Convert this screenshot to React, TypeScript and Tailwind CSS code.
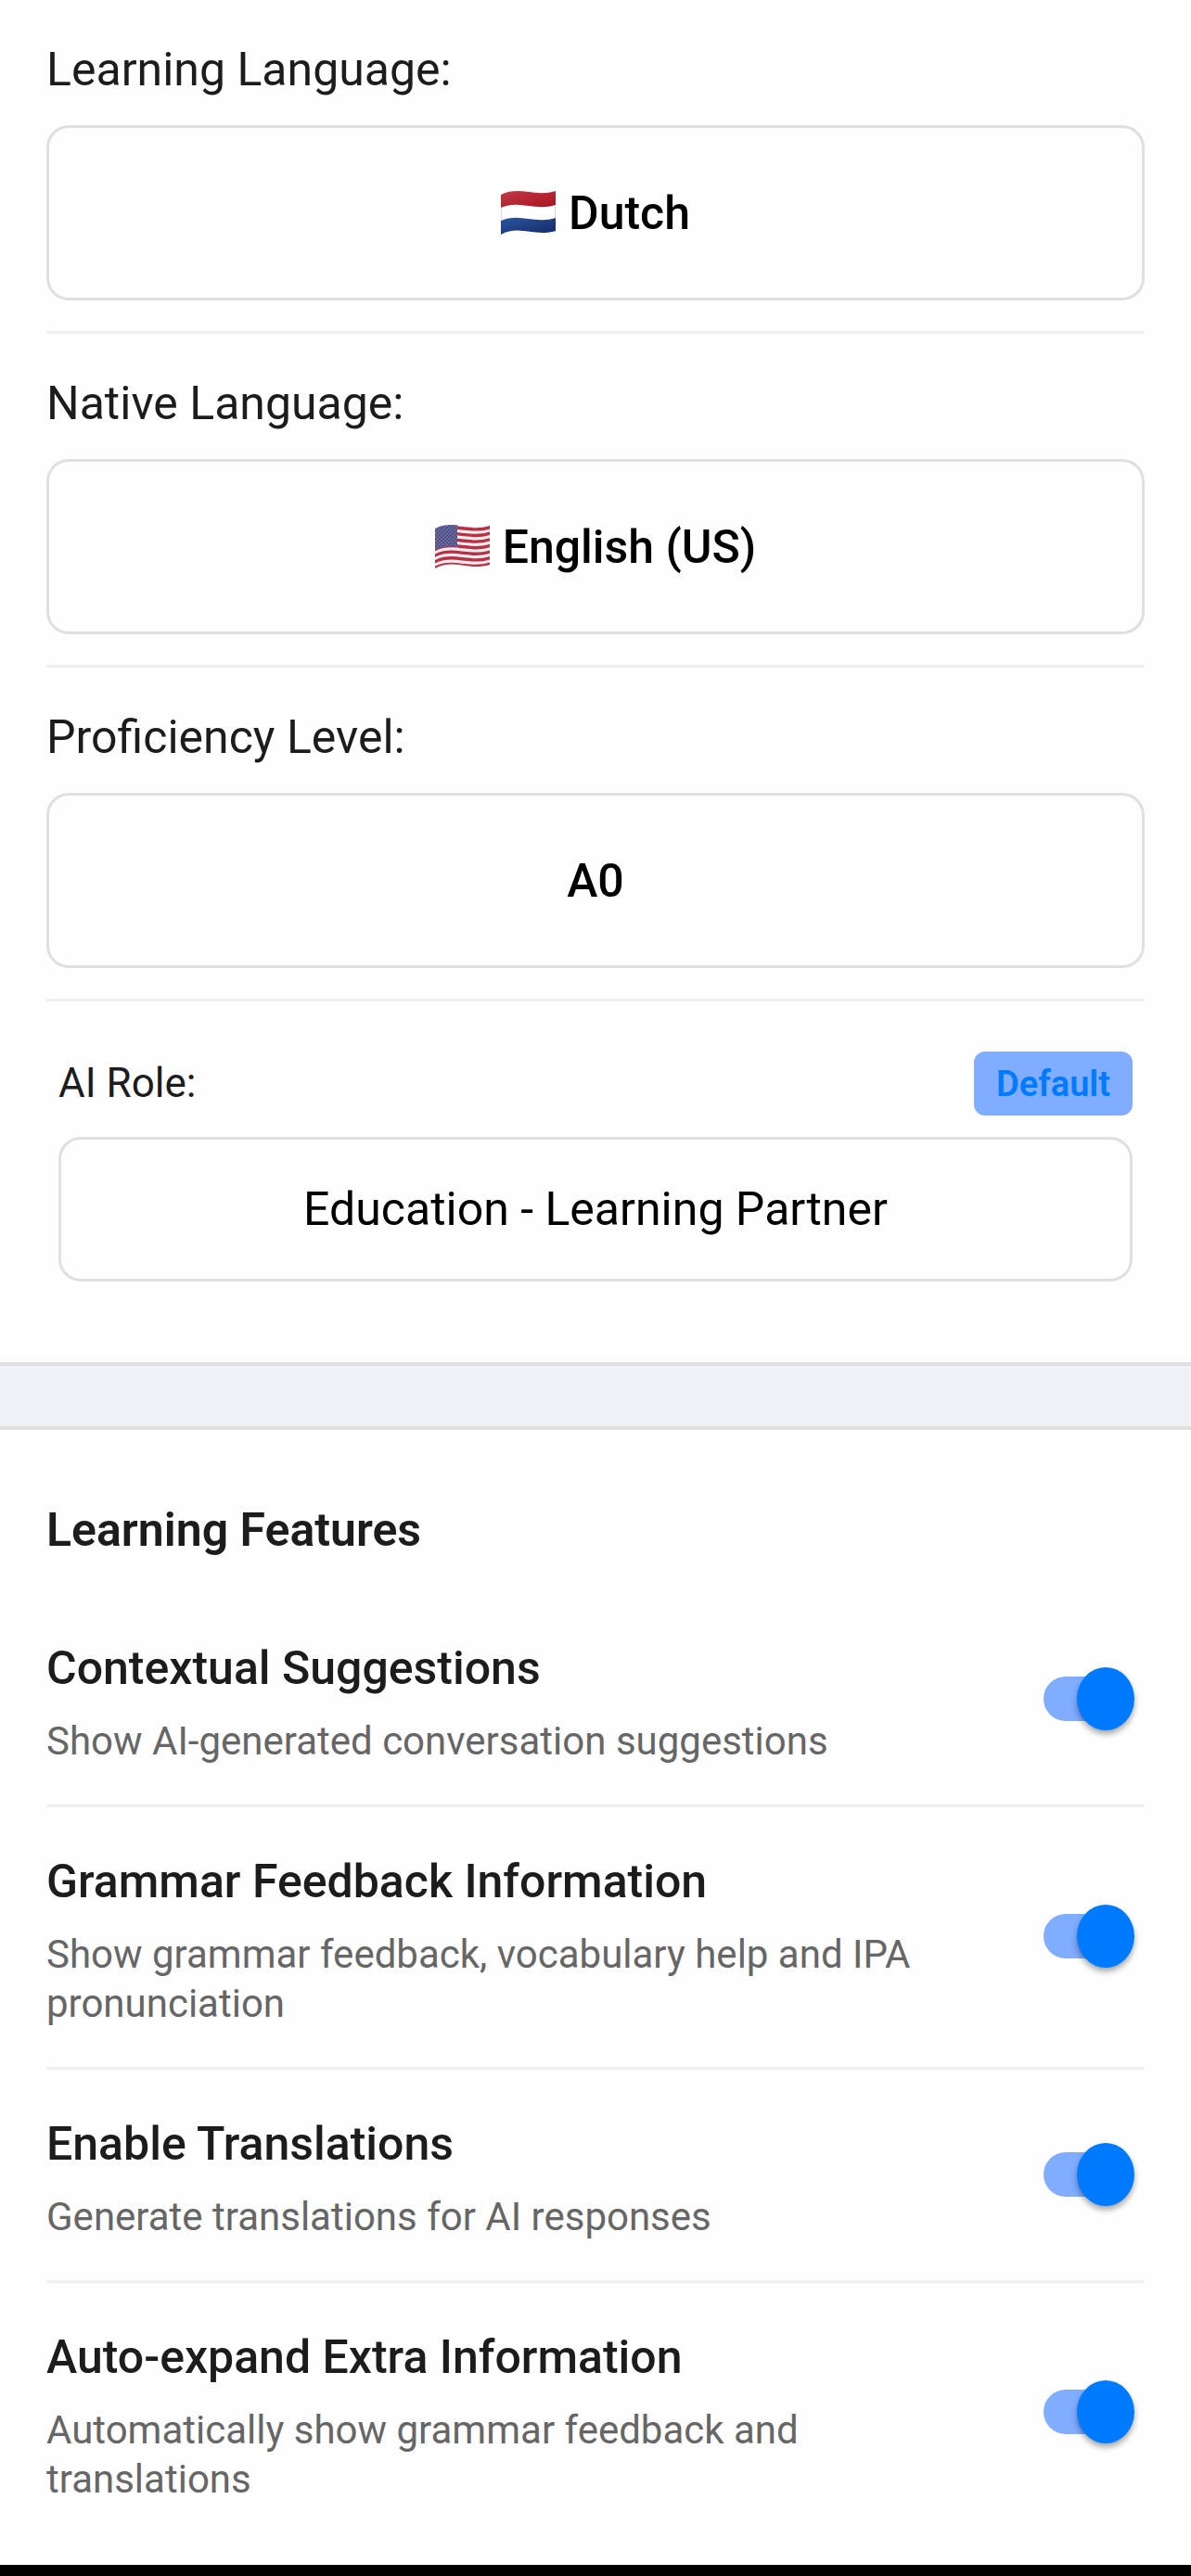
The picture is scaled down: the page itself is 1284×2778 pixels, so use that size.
import React, { useState } from "react";

const DutchFlag = () => (
  <svg viewBox="0 0 59 47" className="w-[59px] h-[47px]" aria-hidden="true">
    <defs>
      <linearGradient id="nl-red" x1="0" y1="0" x2="1" y2="1">
        <stop offset="0" stopColor="#c03a48" />
        <stop offset="1" stopColor="#aa1220" />
      </linearGradient>
      <linearGradient id="nl-blue" x1="0" y1="0" x2="1" y2="1">
        <stop offset="0" stopColor="#2a55a0" />
        <stop offset="1" stopColor="#142a66" />
      </linearGradient>
    </defs>
    <path d="M0 4C20 -6 36 7 59 0V43C36 50 20 36 0 46Z" fill="#fff" />
    <path d="M0 4C20 -6 36 7 59 0V15C36 22 20 9 0 18Z" fill="url(#nl-red)" />
    <path d="M0 32C20 23 36 36 59 29V43C36 50 20 36 0 47Z" fill="url(#nl-blue)" />
    <path d="M0.5 18V32M58.5 15V29" stroke="#dcdcdc" strokeWidth="1" />
  </svg>
);

const UsFlag = () => (
  <svg viewBox="0 0 59 47" className="w-[59px] h-[47px]" aria-hidden="true">
    <defs>
      <clipPath id="us-shape">
        <path d="M0 4C20 -6 36 7 59 0V43C36 50 20 36 0 47Z" />
      </clipPath>
      <pattern id="us-stars" width="4" height="4" patternUnits="userSpaceOnUse">
        <circle cx="1" cy="1" r="0.6" fill="#c9c8e0" />
        <circle cx="3" cy="3" r="0.6" fill="#c9c8e0" />
      </pattern>
    </defs>
    <g clipPath="url(#us-shape)">
      <rect width="59" height="47" fill="#f3edef" />
      {[0, 1, 2, 3, 4, 5, 6].map((i) => (
        <path
          key={i}
          transform={`translate(0 ${i * 6.6})`}
          d="M0 5C20 -5 36 8 59 1V4.4C36 11.4 20 -1.6 0 8.4Z"
          fill="#bb2f44"
        />
      ))}
      <path d="M0 0H24V24C16 22 8 23 0 27Z" fill="#504f88" />
      <path d="M0 0H24V24C16 22 8 23 0 27Z" fill="url(#us-stars)" />
    </g>
  </svg>
);

const pickers = [
  { id: "learning", label: "Learning Language:", value: "Dutch", flag: <DutchFlag /> },
  { id: "native", label: "Native Language:", value: "English (US)", flag: <UsFlag /> },
  { id: "level", label: "Proficiency Level:", value: "A0", flag: null },
];

const features = [
  {
    id: "suggestions",
    title: "Contextual Suggestions",
    text: "Show AI-generated conversation suggestions",
  },
  {
    id: "grammar",
    title: "Grammar Feedback Information",
    text: "Show grammar feedback, vocabulary help and IPA pronunciation",
  },
  {
    id: "translations",
    title: "Enable Translations",
    text: "Generate translations for AI responses",
  },
  {
    id: "expand",
    title: "Auto-expand Extra Information",
    text: "Automatically show grammar feedback and translations",
  },
];

const Toggle = ({ id }: { id: string }) => {
  const [on, setOn] = useState(true);

  return (
    <div className="relative flex items-center shrink-0 w-[98px] h-[68px]">
      <input
        id={id}
        type="checkbox"
        role="switch"
        checked={on}
        onChange={() => setOn(!on)}
        className="peer appearance-none w-[92px] h-12 rounded-full bg-gray-300 checked:bg-[#80adff] cursor-pointer"
      />
      <span className="absolute top-0 left-0 w-[62px] h-[68px] rounded-[50%] bg-white shadow-[0_4px_6px_rgba(0,0,0,0.35)] pointer-events-none peer-checked:left-9 peer-checked:bg-[#007aff]" />
    </div>
  );
};

const App = () => {
  return (
    <div className="min-h-screen flex flex-col bg-[#fefefe] text-[#1c1c1e] font-['Roboto',sans-serif]">
      <section className="px-[50px]">
        {pickers.map((picker) => (
          <div key={picker.id} className="pt-[45px] pb-[33px] border-b-3 border-[#f0f0f0]">
            <div id={`${picker.id}-label`} className="text-[50px] leading-[60px] mb-[30px]">
              {picker.label}
            </div>
            <button
              id={picker.id}
              aria-labelledby={`${picker.id}-label ${picker.id}`}
              className="w-full h-[189px] flex items-center justify-center gap-[14px] border-3 border-[#e0e0e0] rounded-3xl text-[50px] leading-[60px] font-medium text-black"
            >
              {picker.flag}
              {picker.value}
            </button>
          </div>
        ))}

        <div className="px-[13px] pt-[54px] pb-[87px]">
          <div className="flex items-center justify-between mb-[23px]">
            <span id="role-label" className="text-[44px] leading-[53px]">
              AI Role:
            </span>
            <button className="h-[69px] px-6 rounded-xl bg-[#80adff] text-[38px] leading-[46px] font-semibold text-[#007aff]">
              Default
            </button>
          </div>
          <button
            id="role"
            aria-labelledby="role-label role"
            className="w-full h-[156px] border-3 border-[#e0e0e0] rounded-3xl text-[50px] leading-[60px] text-black"
          >
            Education - Learning Partner
          </button>
        </div>
      </section>

      <div className="h-[73px] bg-[#eff1f5] border-y-4 border-[#e0e0e0]" />

      <section className="px-[50px] pt-[78px] pb-[21px]">
        <h2 className="text-[50px] leading-[60px] font-semibold mb-[39px]">Learning Features</h2>
        {features.map((feature) => (
          <div
            key={feature.id}
            className="flex items-center justify-between pt-10 pb-[42px] pr-[11px] border-b-3 border-[#f0f0f0] last:border-transparent"
          >
            <div className="max-w-[960px] pt-[10px] pr-4">
              <label htmlFor={feature.id} className="block text-[50px] leading-[60px] font-medium mb-[22px]">
                {feature.title}
              </label>
              <p className="text-[42px] leading-[53px] text-[#666666]">{feature.text}</p>
            </div>
            <Toggle id={feature.id} />
          </div>
        ))}
      </section>

      <div className="h-3 mt-auto bg-black" />
    </div>
  );
};

export default App;
